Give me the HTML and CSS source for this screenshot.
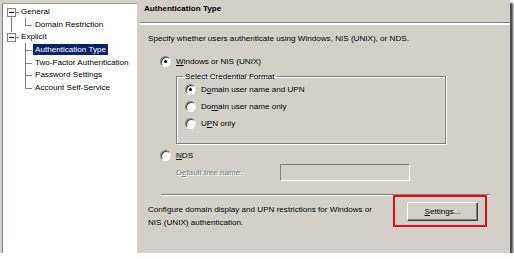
FILE: index.html
```html
<!DOCTYPE html>
<html lang="en">
<head>
  <meta charset="UTF-8">
  <title>Authentication Type</title>
  <link rel="stylesheet" href="styles.css">
</head>
<body>
  <div class="window">
    <!-- left tree -->
    <div class="tree-pane">
      <ul class="tree">
        <li class="node">
          <span class="toggle"></span><span class="label">General</span>
        </li>
        <li class="leaf last"><span class="label">Domain Restriction</span></li>
        <li class="node">
          <span class="toggle"></span><span class="label">Explicit</span>
        </li>
        <li class="leaf"><span class="label selected">Authentication Type</span></li>
        <li class="leaf"><span class="label">Two-Factor Authentication</span></li>
        <li class="leaf"><span class="label">Password Settings</span></li>
        <li class="leaf last"><span class="label">Account Self-Service</span></li>
      </ul>
    </div>

    <!-- right settings page -->
    <div class="page">
      <div class="page-title">Authentication Type</div>
      <div class="page-body">
        <p class="intro">Specify whether users authenticate using Windows, NIS (UNIX), or NDS.</p>

        <label class="option top"><span class="radio checked"></span><span><u>W</u>indows or NIS (UNIX)</span></label>

        <fieldset class="group">
          <legend>Select Credential Format</legend>
          <label class="option"><span class="radio checked"></span><span>D<u>o</u>main user name and UPN</span></label>
          <label class="option"><span class="radio"></span><span>Do<u>m</u>ain user name only</span></label>
          <label class="option"><span class="radio"></span><span>U<u>P</u>N only</span></label>
        </fieldset>

        <label class="option top nds"><span class="radio"></span><span><u>N</u>DS</span></label>
        <div class="tree-name">
          <span class="disabled">D<u>e</u>fault tree name:</span>
          <span class="textbox"></span>
        </div>

        <div class="separator"></div>

        <div class="footer">
          <p class="footer-text">Configure domain display and UPN restrictions for Windows or<br>NIS (UNIX) authentication.</p>
          <div class="highlight">
            <button class="button"><u>S</u>ettings...</button>
          </div>
        </div>
      </div>
    </div>
  </div>
</body>
</html>
```

FILE: styles.css
```css
/* base */
html, body {
  margin: 0;
  padding: 0;
  background: #ffffff;
  font-family: 'Liberation Sans', Arial, sans-serif;
  font-size: 8.1px;
  color: #000000;
}
*, *::before, *::after {
  box-sizing: border-box;
}
p {
  margin: 0;
}
/* outer window with drop shadow */
.window {
  display: flex;
  width: 510px;
  height: 253px;
  background: #d4d0c8;
  box-shadow: 3px 3px 2px #454545;
}
/* tree */
.tree-pane {
  width: 140px;
  padding: 3px 3px 0 2px;
}
.tree {
  list-style: none;
  margin: 0;
  padding: 2px 0 0 0;
  height: 100%;
  background: #ffffff;
  border-top: 1px solid #a0a0a0;
  border-left: 1px solid #808080;
}
.tree li {
  position: relative;
  height: 12.7px;
  line-height: 12.7px;
  white-space: nowrap;
}
.node {
  padding-left: 16px;
}
.toggle {
  position: absolute;
  left: 4px;
  top: 2px;
  width: 9px;
  height: 9px;
  border: 1px solid #808080;
  background: #ffffff;
}
.toggle::after {
  content: "";
  position: absolute;
  left: 1px;
  top: 3px;
  width: 5px;
  height: 1px;
  background: #000000;
}
.node .label {
  padding-left: 2px;
}
.node::after {
  content: "";
  position: absolute;
  left: 13px;
  top: 6px;
  width: 3px;
  height: 1px;
  background: #808080;
}
.leaf {
  padding-left: 30px;
}
.leaf::before {
  content: "";
  position: absolute;
  left: 22px;
  top: -1px;
  width: 1px;
  height: 12.7px;
  background: #808080;
}
.leaf.last::before {
  height: 7px;
}
.leaf::after {
  content: "";
  position: absolute;
  left: 22px;
  top: 6px;
  width: 7px;
  height: 1px;
  background: #808080;
}
/* vertical line joining the two top level nodes */
.tree li:first-child::before {
  content: "";
  position: absolute;
  left: 8px;
  top: 11px;
  width: 1px;
  height: 15px;
  background: #808080;
}
.leaf .label {
  padding: 1px 2px;
}
.selected {
  background: #0a246a;
  color: #ffffff;
}
/* page */
.page {
  flex: 1;
  display: flex;
  flex-direction: column;
}
.page-title {
  height: 24px;
  padding: 4px 0 0 4px;
  font-weight: 700;
  border-bottom: 1px solid #ffffff;
  box-shadow: 0 1px 0 #ffffff, inset 0 -1px 0 #808080;
}
.page-body {
  padding: 10px 0 0 8px;
}
.intro {
  height: 19px;
}
.option {
  display: flex;
  align-items: center;
  gap: 5px;
  height: 17px;
}
.option.top {
  padding-left: 12px;
}
.radio {
  position: relative;
  width: 11px;
  height: 11px;
  border-radius: 50%;
  background: #ffffff;
  border: 1px solid;
  border-color: #808080 #e8e8e8 #ffffff #808080;
  box-shadow: inset 1px 1px 0 #404040;
}
.radio.checked::after {
  content: "";
  position: absolute;
  left: 3px;
  top: 3px;
  width: 3px;
  height: 3px;
  border-radius: 50%;
  background: #000000;
}
.group {
  width: 270px;
  height: 72px;
  margin: 2px 0 0 28px;
  padding: 0 0 0 8px;
  border: 1px solid #808080;
  box-shadow: 1px 1px 0 #ffffff, inset 1px 1px 0 #ffffff;
}
.group legend {
  padding: 0 2px;
  margin-left: -2px;
}
.nds {
  margin-top: 3px;
}
.tree-name {
  display: flex;
  align-items: center;
  justify-content: space-between;
  width: 262px;
  height: 17px;
  padding-left: 28px;
}
.disabled {
  color: #808080;
  text-shadow: 1px 1px 0 #ffffff;
}
.textbox {
  width: 130px;
  height: 17px;
  border: 1px solid;
  border-color: #808080 #ffffff #ffffff #808080;
}
.separator {
  width: 329px;
  margin: 13px 0 0 13px;
  border-top: 1px solid #808080;
  border-bottom: 1px solid #ffffff;
}
.footer {
  display: flex;
  align-items: flex-start;
  margin-top: -1px;
}
.footer-text {
  width: 245px;
  padding-top: 9px;
  line-height: 12.5px;
}
.highlight {
  padding: 5px 7px 4px 12px;
  border: 2px solid #e0101a;
}
.button {
  width: 71px;
  height: 19px;
  padding: 0;
  font: inherit;
  color: #000000;
  background: #d4d0c8;
  border: 1px solid;
  border-color: #ffffff #404040 #404040 #ffffff;
  box-shadow: inset -1px -1px 0 #808080;
}
```
